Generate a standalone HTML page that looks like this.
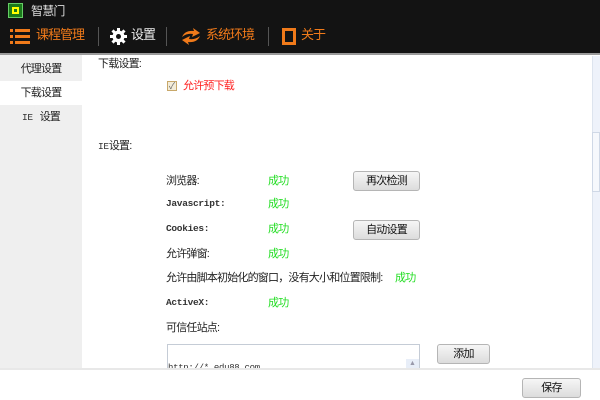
<!DOCTYPE html>
<html><head><meta charset="utf-8"><style>
*{margin:0;padding:0;box-sizing:border-box}
body{width:600px;height:400px;position:relative;overflow:hidden;background:#fff;font-family:"Liberation Sans","Noto Sans CJK SC",sans-serif;font-size:11px;letter-spacing:-0.8px;color:#222}
.a{position:absolute;white-space:nowrap;line-height:14px}
#top{position:absolute;left:0;top:0;width:600px;height:53px;background:#131313}
#line{position:absolute;left:0;top:53px;width:600px;height:2px;background:#9a9a9a}
.tb{color:#f07a1a;font-size:13px;top:28px;letter-spacing:-1px}
.sep{position:absolute;top:27px;width:1px;height:19px;background:#555}
#side{position:absolute;left:0;top:55px;width:82px;height:313px;background:#efefef}
.si{position:absolute;left:0;width:82px;height:24px;line-height:24px;text-align:center}
.ok{color:#22dd22}
.mono{font-family:"Liberation Mono",monospace;font-size:9.5px;font-weight:bold;color:#333;letter-spacing:-0.3px}
.btn{position:absolute;border:1px solid #b5b5b5;border-radius:3px;background:linear-gradient(#f6f6f6,#dcdcdc);text-align:center;color:#111}
</style></head><body>
<div id="top"></div>
<div class="a" style="left:8px;top:3px;width:15px;height:15px;background:#1a7a1a;border:1px solid #6c6"></div>
<div class="a" style="left:12px;top:7px;width:7px;height:7px;border:2px solid #ff0;"></div>
<div class="a" style="left:31px;top:4px;color:#ddd;font-size:12px">智慧门</div>
<svg class="a" style="left:10px;top:28px" width="20" height="16"><g fill="#f07a1a"><rect x="0" y="1" width="3" height="3"/><rect x="0" y="7" width="3" height="3"/><rect x="0" y="13" width="3" height="3"/><rect x="5" y="1" width="15" height="3"/><rect x="5" y="7" width="15" height="3"/><rect x="5" y="13" width="15" height="3"/></g></svg>
<div class="a tb" style="left:36px">课程管理</div>
<div class="sep" style="left:98px"></div>
<svg class="a" style="left:110px;top:28px" width="17" height="17" viewBox="0 0 17 17"><g fill="#fff"><circle cx="8.5" cy="8.5" r="6"/><rect x="7" y="0" width="3" height="17"/><rect x="0" y="7" width="17" height="3"/><rect x="7" y="0" width="3" height="17" transform="rotate(45 8.5 8.5)"/><rect x="7" y="0" width="3" height="17" transform="rotate(-45 8.5 8.5)"/></g><circle cx="8.5" cy="8.5" r="2.5" fill="#131313"/></svg>
<div class="a tb" style="left:131px;color:#eee">设置</div>
<div class="sep" style="left:166px"></div>
<svg class="a" style="left:180px;top:28px" width="22" height="17"><path d="M2 9 Q5 2 14 3 L13 0 L20 5 L12 9 L13 6 Q7 5 2 9Z M20 8 Q17 15 8 14 L9 17 L2 12 L10 8 L9 11 Q15 12 20 8Z" fill="#f07a1a"/></svg>
<div class="a tb" style="left:206px">系统环境</div>
<div class="sep" style="left:268px"></div>
<div class="a" style="left:282px;top:28px;width:14px;height:17px;border:3px solid #f07a1a"></div>
<div class="a tb" style="left:301px">关于</div>
<div id="line"></div>
<div id="side"></div>
<div class="si" style="top:57px">代理设置</div>
<div class="si" style="top:81px;background:#fff">下载设置</div>
<div class="si" style="top:105px"><span class="mono" style="font-weight:normal">IE</span>&nbsp;&nbsp;&nbsp;设置</div>
<div class="a" style="left:98px;top:57px">下载设置:</div>
<div class="a" style="left:167px;top:81px;width:10px;height:10px;border:1px solid #c8a86a;background:#f3ecd8;font-size:9px;line-height:8px;text-align:center;color:#666;letter-spacing:0">✓</div>
<div class="a" style="left:183px;top:79px;color:#f22">允许预下载</div>
<div class="a" style="left:98px;top:139px"><span class="mono" style="font-weight:normal">IE</span>设置:</div>
<div class="a" style="left:166px;top:174px">浏览器:</div>
<div class="a mono" style="left:166px;top:197px">Javascript:</div>
<div class="a mono" style="left:166px;top:222px">Cookies:</div>
<div class="a" style="left:166px;top:247px">允许弹窗:</div>
<div class="a" style="left:166px;top:271px">允许由脚本初始化的窗口，没有大小和位置限制:</div>
<div class="a mono" style="left:166px;top:296px">ActiveX:</div>
<div class="a" style="left:166px;top:321px">可信任站点:</div>
<div class="a ok" style="left:268px;top:174px">成功</div>
<div class="a ok" style="left:268px;top:197px">成功</div>
<div class="a ok" style="left:268px;top:222px">成功</div>
<div class="a ok" style="left:268px;top:247px">成功</div>
<div class="a ok" style="left:395px;top:271px">成功</div>
<div class="a ok" style="left:268px;top:296px">成功</div>
<div class="btn" style="left:353px;top:171px;width:67px;height:20px;line-height:18px">再次检测</div>
<div class="btn" style="left:353px;top:220px;width:67px;height:20px;line-height:18px">自动设置</div>
<div class="a" style="left:167px;top:344px;width:253px;height:30px;border:1px solid #c5ccd6;background:#fff"></div>
<div class="a mono" style="left:168px;top:361px;font-weight:normal;font-size:9px">http://*.edu88.com</div>
<div class="a" style="left:406px;top:359px;width:13px;height:10px;background:#e8eef8;color:#99a;font-size:7px;line-height:10px;text-align:center;letter-spacing:0">▲</div>
<div class="btn" style="left:437px;top:344px;width:53px;height:20px;line-height:18px">添加</div>
<div class="a" style="left:592px;top:56px;width:8px;height:312px;background:#eef2fa;border-left:1px solid #dde4ee"></div>
<div class="a" style="left:592px;top:132px;width:8px;height:60px;background:#f6f8fc;border:1px solid #cfd8e6"></div>
<div class="a" style="left:0;top:368px;width:600px;height:2px;background:#e8e8e8"></div>
<div class="a" style="left:0;top:370px;width:600px;height:30px;background:#fff"></div>
<div class="btn" style="left:522px;top:378px;width:59px;height:20px;line-height:18px">保存</div>
</body></html>
